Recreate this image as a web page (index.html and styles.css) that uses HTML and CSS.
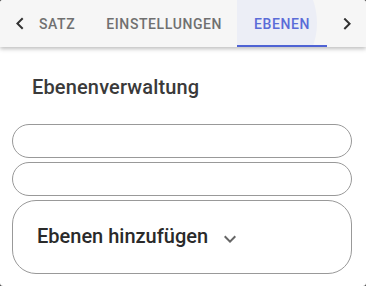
FILE: index.html
```html
<!DOCTYPE html>
<html lang="de">
<head>
<meta charset="utf-8">
<link rel="stylesheet" href="styles.css">
</head>
<body>
<div class="dialog">
  <div class="tabbar">
    <div class="scroll-btn">
      <svg width="24" height="24" viewBox="0 0 24 24"><path d="M15.41 16.09l-4.58-4.59 4.58-4.59L14 5.5l-6 6 6 6z" fill="#333"/></svg>
    </div>
    <div class="tab tab-first">SATZ</div>
    <div class="tab">EINSTELLUNGEN</div>
    <div class="tab tab-active">EBENEN</div>
    <div class="scroll-btn scroll-right">
      <svg width="24" height="24" viewBox="0 0 24 24"><path d="M8.59 16.34l4.58-4.59-4.58-4.59L10 5.75l6 6-6 6z" fill="#333"/></svg>
    </div>
  </div>
  <div class="content">
    <h2 class="title">Ebenenverwaltung</h2>
    <div class="pill"></div>
    <div class="pill"></div>
    <div class="panel">
      <span class="panel-label">Ebenen hinzufügen</span>
      <svg class="chev" width="24" height="24" viewBox="0 0 24 24"><path d="M16.59 8.59L12 13.17 7.41 8.59 6 10l6 6 6-6z" fill="#666"/></svg>
    </div>
  </div>
</div>
</body>
</html>
```
FILE: styles.css
```css
html, body {
  margin: 0;
  padding: 0;
  background: #4a4a4a;
}
body {
  width: 366px;
  height: 286px;
  overflow: hidden;
  font-family: Roboto, "Noto Sans", sans-serif;
}
.dialog {
  width: 366px;
  height: 286px;
  background: #fff;
  border-radius: 3px;
  overflow: hidden;
}
.tabbar {
  display: flex;
  align-items: stretch;
  height: 47px;
  background: #f6f6f6;
  box-shadow: 0 2px 4px rgba(0,0,0,0.25);
  position: relative;
  z-index: 1;
}
.scroll-btn {
  width: 39px;
  display: flex;
  align-items: center;
  justify-content: center;
  flex: none;
}
.scroll-right {
  width: 40px;
}
.tab {
  display: flex;
  align-items: center;
  justify-content: center;
  padding: 0 15px;
  font-size: 14px;
  font-weight: 500;
  letter-spacing: 0.6px;
  color: #707070;
  flex: none;
  position: relative;
  overflow: hidden;
}
.tab-first {
  padding-left: 0;
  padding-right: 16px;
}
.tab-active {
  width: 90px;
  padding: 0;
  box-sizing: border-box;
  color: #5a6cd8;
}
.tab-active::before {
  content: "";
  position: absolute;
  width: 136px;
  height: 136px;
  border-radius: 50%;
  left: -56px;
  top: -45px;
  background: #eceef6;
  z-index: -1;
}
.tab-active::after {
  content: "";
  position: absolute;
  left: 0;
  right: 0;
  bottom: 0;
  height: 2px;
  background: #4f63d4;
}
.content {
  padding: 0 14px 0 12px;
}
.title {
  margin: 28px 0 25px 20px;
  font-size: 20px;
  font-weight: 500;
  letter-spacing: 0.15px;
  color: #3a3a3a;
  line-height: 24px;
}
.pill {
  height: 32px;
  border: 1px solid #999;
  border-radius: 17px;
  margin-bottom: 4px;
}
.panel {
  height: 72px;
  border: 1px solid #999;
  border-radius: 24px;
  display: flex;
  align-items: center;
  padding-left: 24px;
  gap: 10px;
}
.panel-label {
  font-size: 20px;
  font-weight: 500;
  color: #2a2a2a;
  margin-top: -2px;
}
.chev {
  margin-top: 3px;
}
```
